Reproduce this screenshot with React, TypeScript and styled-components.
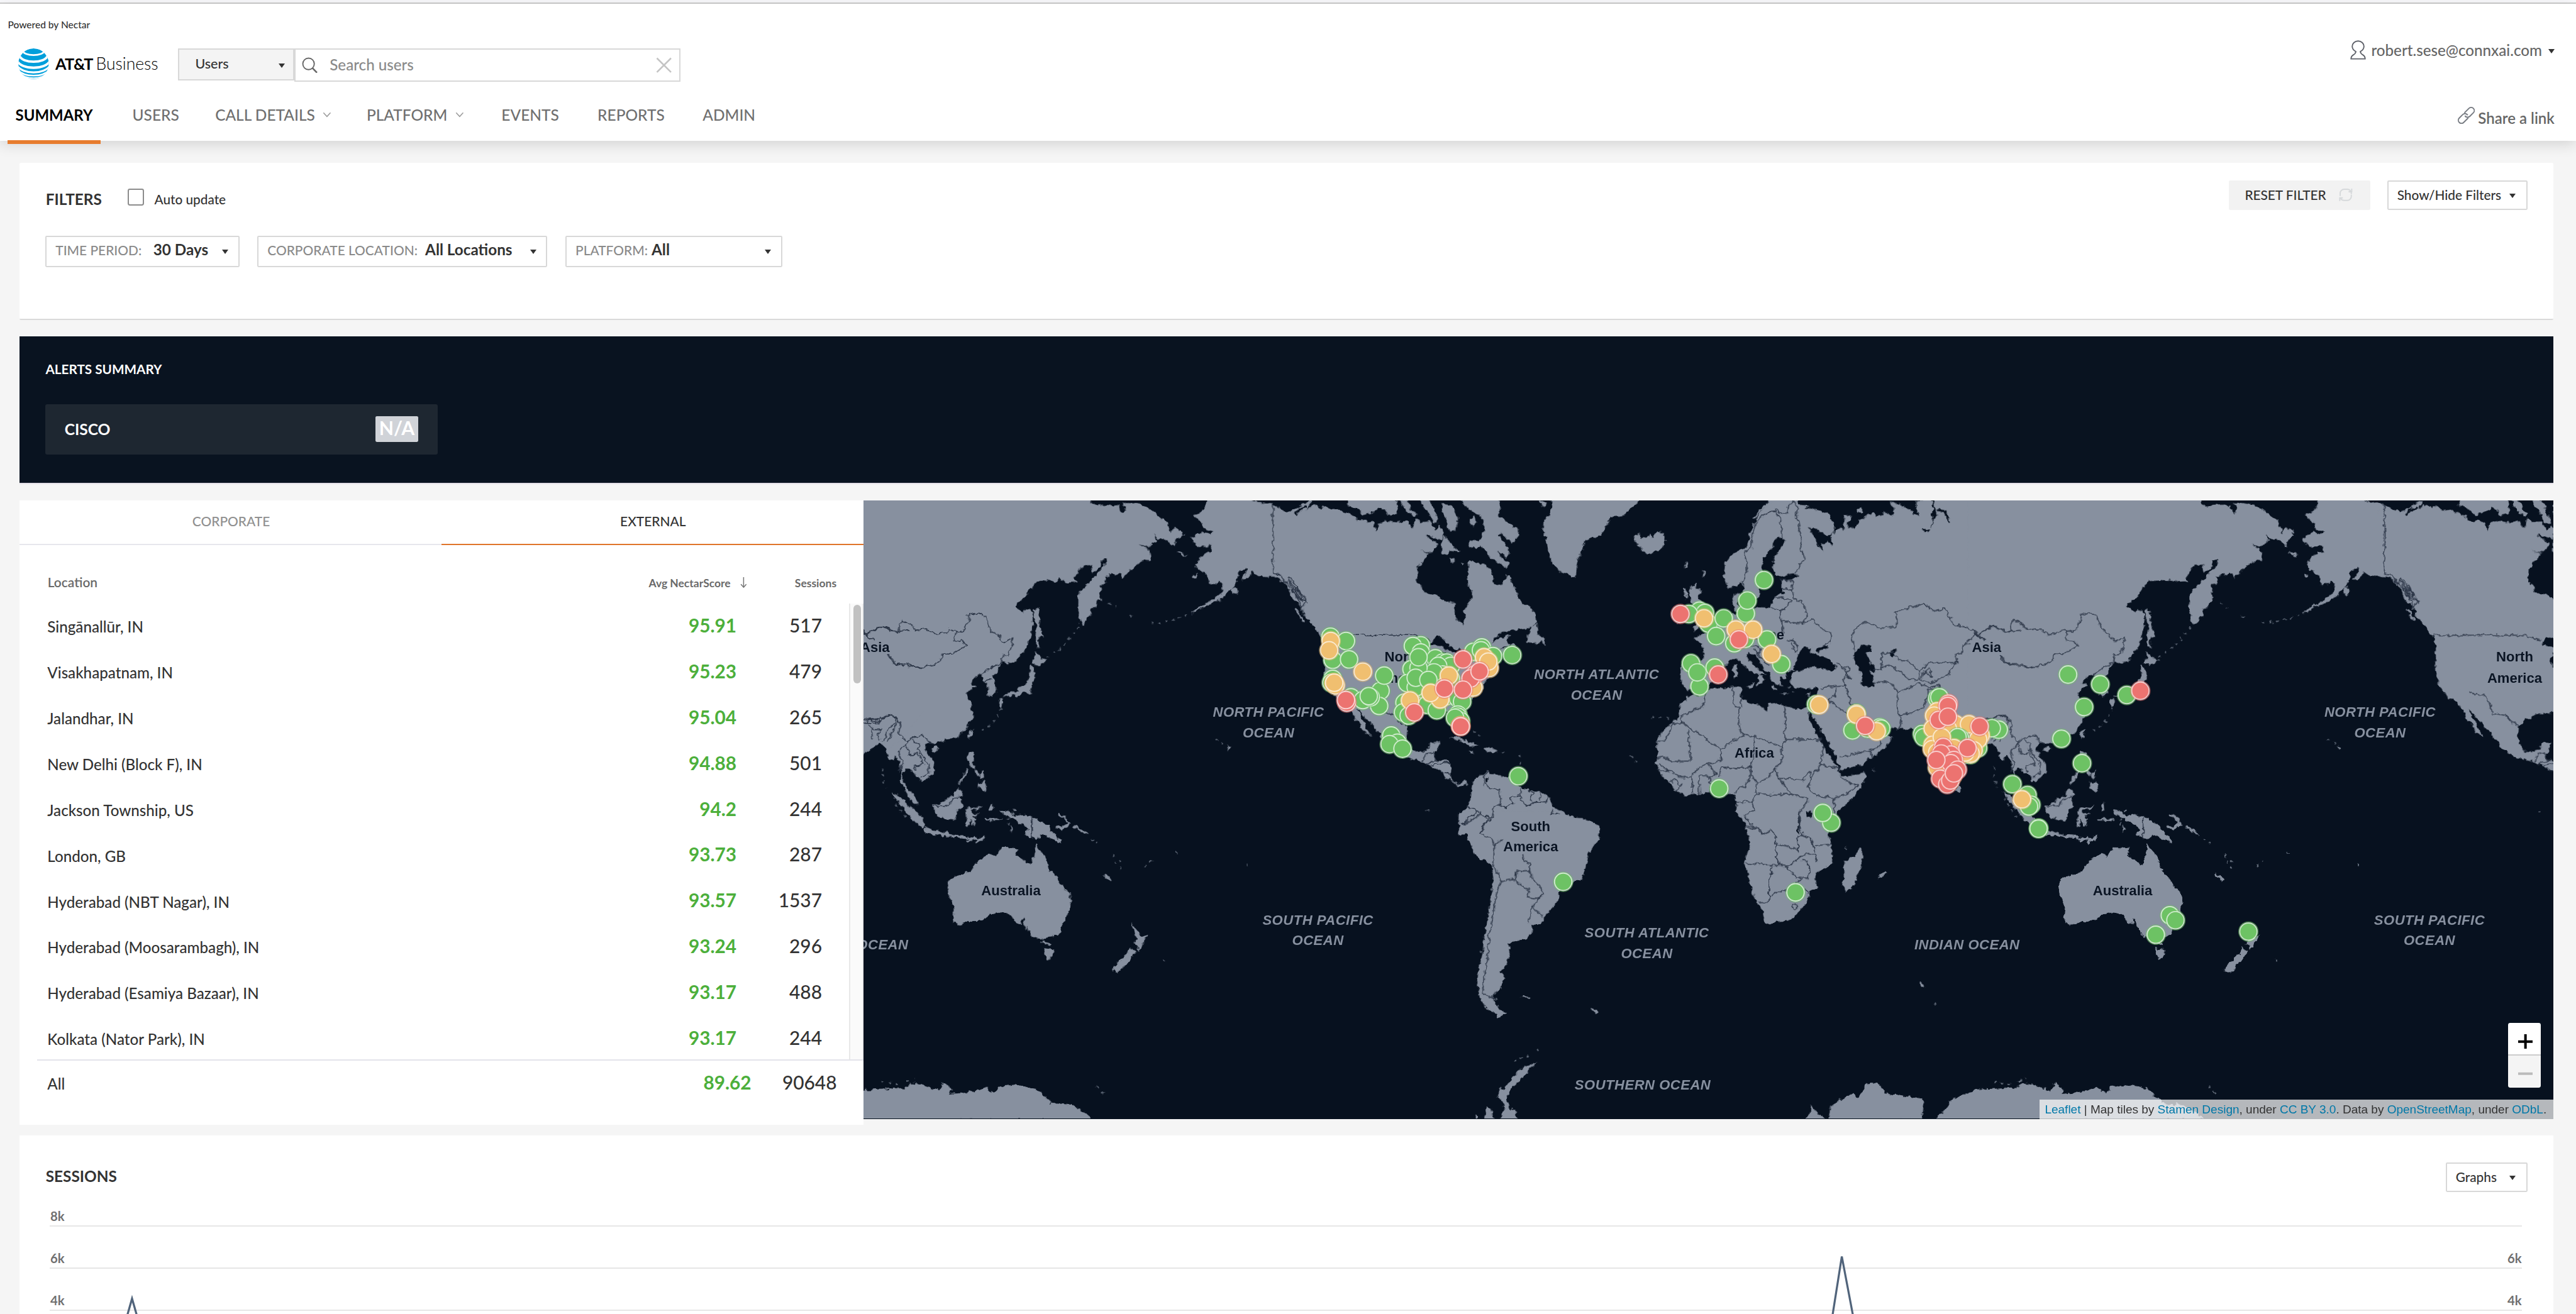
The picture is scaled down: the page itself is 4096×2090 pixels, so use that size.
import React from "react";
import styled, { createGlobalStyle, css } from "styled-components";

/* 1rem equals one layout unit; the layout is 1898.5 units wide. */
const GlobalStyle = createGlobalStyle`
  html { font-size: calc(100vw / 1898.5); }
  * { box-sizing: border-box; }
  body { margin: 0; background: #f5f5f5; overflow: hidden; }
  #root { height: 100vh; overflow: hidden; }
`;

const Page = styled.div`
  display: flex;
  flex-direction: column;
  height: 968.5rem;
  font-family: Lato, "Open Sans", sans-serif;
  font-size: 11.2rem;
  font-weight: 500;
  color: #333;
  white-space: nowrap;
`;

const TopStrip = styled.div`
  flex: none;
  height: 3rem;
  background: #f8f8fb;
  border-bottom: 1rem solid #ccc;
`;

const Header = styled.header`
  flex: none;
  position: relative;
  display: flex;
  justify-content: space-between;
  height: 101rem;
  background: #fff;
  box-shadow: 0 3rem 10rem rgba(0, 0, 0, 0.14);
`;

const HeaderLeft = styled.div`
  display: flex;
  flex-direction: column;
`;

const Powered = styled.div`
  margin: 10.3rem 0 12.2rem 5.8rem;
  font-size: 7.2rem;
  line-height: 10rem;
`;

const BrandRow = styled.div`
  display: flex;
  align-items: flex-start;
  height: 24.8rem;
  padding-left: 13.6rem;
`;

const Brand = styled.div`
  display: flex;
  align-items: center;
  width: 117.4rem;
  color: #000;
  line-height: 22.8rem;
  svg { width: 22.6rem; height: 22.6rem; margin-right: 4.6rem; }
`;
const BrandBold = styled.span`
  font-size: 11.7rem;
  font-weight: 700;
  letter-spacing: -0.3rem;
`;
const BrandLight = styled.span`
  margin-left: 2.2rem;
  font-size: 12.3rem;
  font-weight: 300;
`;

const Caret = styled.span`
  width: 0;
  height: 0;
  border: 2.6rem solid transparent;
  border-top: 3.6rem solid #333;
  border-bottom: 0;
`;

const ScopeSelect = styled.div`
  display: flex;
  align-items: center;
  justify-content: space-between;
  width: 86rem;
  height: 24rem;
  padding: 0 6.3rem 1.4rem 12rem;
  background: #f4f4f4;
  border: 1rem solid #d8d8d8;
  font-size: 9.95rem;
  ${Caret} { margin-top: 3rem; }
`;

const SearchBox = styled.div`
  display: flex;
  align-items: center;
  width: 284.6rem;
  height: 24.8rem;
  padding: 0 5.6rem 0 4.6rem;
  border: 1rem solid #d8d8d8;
  background: #fff;
  svg { width: 11.8rem; height: 11.8rem; }
`;
const SearchText = styled.span`
  flex: 1;
  padding-left: 8.7rem;
  padding-bottom: 1.2rem;
  font-size: 11.2rem;
  color: #8a8a8a;
`;

const Nav = styled.nav`
  display: grid;
  grid-template-columns: 86.2rem 61rem 111.6rem 99.4rem 70.8rem 77.5rem auto;
  justify-items: start;
  margin: 4.9rem 0 0 5.5rem;
`;
const NavItem = styled.div<{ $active?: boolean }>`
  display: flex;
  align-items: center;
  height: 40.8rem;
  padding: 1rem 5.9rem 0;
  border-bottom: 3rem solid ${(p) => (p.$active ? "#e77c2e" : "transparent")};
  line-height: 37.8rem;
  font-size: ${(p) => (p.$active ? 11.1 : 11.35)}rem;
  font-weight: ${(p) => (p.$active ? 700 : 500)};
  letter-spacing: 0;
  color: ${(p) => (p.$active ? "#000" : "#707070")};
  svg { width: 6.4rem; height: 4rem; margin-left: 5.8rem; }
`;

const HeaderRight = styled.div`
  display: flex;
  flex-direction: column;
  align-items: flex-end;
  padding: 25.7rem 15.8rem 0 0;
  color: #666;
`;
const UserMenu = styled.div`
  display: flex;
  align-items: center;
  height: 16rem;
  svg { width: 11.6rem; height: 14.4rem; margin-right: 4rem; }
  ${Caret} { margin: 2rem 0 0 4.6rem; }
`;
const ShareLink = styled.div`
  display: flex;
  align-items: center;
  height: 16rem;
  margin-top: 34.4rem;
  font-weight: 600;
  font-size: 11.15rem;
  svg { width: 12.6rem; height: 12.6rem; margin: 0 2.5rem 4rem 0; }
`;

const Main = styled.main`
  display: flex;
  flex-direction: column;
  flex: 1;
  min-height: 0;
  padding: 16rem 16.9rem 0 14.5rem;
`;

const FilterPanel = styled.section`
  flex: none;
  height: 116rem;
  padding: 13rem 19rem 0 18.9rem;
  background: #fff;
  border-bottom: 1rem solid #d9d9d9;
  border-radius: 1rem;
`;
const FilterHead = styled.div`
  display: flex;
  justify-content: space-between;
  align-items: flex-start;
  height: 41rem;
`;
const Group = styled.div`
  display: flex;
`;
const FilterTitle = styled.div`
  display: flex;
  align-items: center;
  height: 27.8rem;
`;
const Heading = styled.h2`
  margin: 0 0 0 0.3rem;
  font-size: 11.3rem;
  font-weight: 700;
`;
const CheckBox = styled.span`
  width: 12rem;
  height: 12.6rem;
  margin: 0 7.5rem 3rem 19.3rem;
  border: 1rem solid #8c8c8c;
  border-radius: 1.6rem;
`;
const CheckLabel = styled.span`
  font-size: 9.62rem;
`;

const Button = styled.button<{ $w: number; $flat?: boolean }>`
  display: flex;
  align-items: center;
  justify-content: space-between;
  width: ${(p) => p.$w}rem;
  height: 22rem;
  margin: 0;
  border: 1rem solid #d8d8d8;
  border-radius: 1rem;
  background: #fff;
  font: 500 9.65rem/20rem Lato, sans-serif;
  color: #333;
  padding: 0 7.6rem 1rem 6.2rem;
  ${Caret} { margin-top: 1.4rem; }
  ${(p) =>
    p.$flat &&
    css`
      margin-right: 12.9rem;
      border-color: #f2f2f2;
      background: #f2f2f2;
      padding: 0 11.4rem 1rem 10.9rem;
    `}
  svg { width: 11rem; height: 11rem; }
`;

const SelectRow = styled.div`
  display: flex;
  gap: 13.2rem;
`;
const Select = styled.div<{ $w: number; $gap: number }>`
  display: flex;
  align-items: baseline;
  width: ${(p) => p.$w}rem;
  height: 22.8rem;
  padding: 0 7rem 0 6.6rem;
  border: 1rem solid #d8d8d8;
  border-radius: 1rem;
  line-height: 18.8rem;
  font-size: 9.7rem;
  color: #8a8a8a;
  b { flex: 1; margin-left: ${(p) => p.$gap}rem; font-size: 11.25rem; color: #333; }
  ${Caret} { align-self: center; margin-top: 0.4rem; }
`;

const AlertPanel = styled.section`
  flex: none;
  height: 109rem;
  margin-top: 12rem;
  padding: 18.5rem 19rem 0 19.1rem;
  background: #091320;
  border-bottom: 1.1rem solid #e4e0e8;
`;
const AlertTitle = styled.h2`
  margin: 0 0 19.5rem;
  font-size: 9.6rem;
  line-height: 12rem;
  font-weight: 700;
  color: #fff;
`;
const AlertCard = styled.div`
  display: flex;
  align-items: center;
  justify-content: space-between;
  width: 288.9rem;
  height: 37.1rem;
  padding: 0 14.1rem 0.6rem 14rem;
  border-radius: 1.4rem;
  background: #1e2731;
  color: #fff;
  font-size: 11.4rem;
  font-weight: 700;
`;
const AlertValue = styled.span`
  width: 31.9rem;
  height: 18.9rem;
  border-radius: 1rem;
  background: #d0d3d8;
  font-size: 14rem;
  line-height: 17.4rem;
  text-align: center;
`;

const Overview = styled.section`
  flex: none;
  display: flex;
  align-items: flex-start;
  height: 460rem;
  margin-top: 12rem;
`;
const TablePanel = styled.div`
  flex: none;
  display: flex;
  flex-direction: column;
  width: 621.8rem;
  height: 460rem;
  background: #fff;
`;
const Tabs = styled.div`
  display: flex;
  height: 33rem;
`;
const Tab = styled.div<{ $active?: boolean }>`
  flex: 1;
  border-bottom: 1rem solid ${(p) => (p.$active ? "#e0752a" : "#e6e6ec")};
  text-align: center;
  text-indent: 0.8rem;
  line-height: 31rem;
  font-size: 9.7rem;
  color: ${(p) => (p.$active ? "#333" : "#909090")};
`;
const TableHead = styled.div`
  display: flex;
  align-items: center;
  height: 43rem;
  padding: 11.4rem 19.8rem 0 20.6rem;
  font-size: 9.7rem;
  font-weight: 600;
  color: #6a6a6a;
  svg { width: 5rem; height: 8rem; margin: 0.6rem 35.4rem 0 7rem; }
`;
const HeadName = styled.span`
  flex: 1;
`;
const HeadNumber = styled.span`
  padding-top: 1rem;
  font-size: 8.1rem;
  font-weight: 700;
`;
const TableBody = styled.div`
  display: flex;
  height: 336.2rem;
  overflow: hidden;
`;
const Rows = styled.div`
  flex: 1;
`;
const Row = styled.div`
  display: flex;
  align-items: center;
  height: 33.8rem;
  padding: 0 19.7rem 0 20.4rem;
`;
const Place = styled.span`
  flex: 1;
  font-size: 11.2rem;
`;
const Score = styled.span`
  margin-bottom: 2rem;
  font-size: 13.8rem;
  font-weight: 700;
  color: #4caf3b;
`;
const Count = styled.span`
  width: 63rem;
  margin-bottom: 2rem;
  font-size: 13.85rem;
  text-align: right;
`;
const Track = styled.div`
  width: 10.8rem;
  padding: 1rem 0 0 2.4rem;
  border-left: 1rem solid #e8e8e8;
  border-right: 1rem solid #ededed;
  background: #fafafa;
`;
const Thumb = styled.div`
  width: 5.8rem;
  height: 58rem;
  border-radius: 3rem;
  background: #c1c1c1;
`;
const TotalRow = styled.div`
  display: flex;
  align-items: center;
  height: 34.6rem;
  margin-left: 12.9rem;
  padding: 0 19.6rem 0 7.5rem;
  border-top: 1rem solid #e3e3ea;
`;

const MapPanel = styled.div`
  position: relative;
  flex: 1;
  height: 456rem;
  background: #07111f;
  overflow: hidden;
`;
const MapCanvas = styled.svg`
  display: block;
  width: 100%;
  height: 100%;
  .land polygon { fill: #87909f; }
  .land polyline { fill: none; stroke: #87909f; vector-effect: non-scaling-stroke; }
  .water polygon { fill: #07111f; }
  .water polyline { fill: none; stroke: #07111f; vector-effect: non-scaling-stroke; }
  .border polyline {
    fill: none;
    stroke: #2b3546;
    stroke-width: 1.6px;
    stroke-linejoin: round;
    vector-effect: non-scaling-stroke;
  }
  text { font: 700 10.24px "Liberation Sans", Arial, sans-serif; text-anchor: middle; }
  .continent { fill: #0a1423; }
  .ocean { fill: #87909f; font-style: italic; letter-spacing: 0.22px; }
`;
const ZoomControl = styled.div`
  position: absolute;
  right: 9.2rem;
  bottom: 23rem;
  display: flex;
  flex-direction: column;
  width: 24rem;
  border-radius: 1.6rem;
  overflow: hidden;
`;
const ZoomButton = styled.div<{ $off?: boolean }>`
  display: flex;
  align-items: center;
  justify-content: center;
  height: 24rem;
  background: ${(p) => (p.$off ? "#f4f4f4" : "#fff")};
  border-bottom: ${(p) => (p.$off ? "0" : "1rem solid #ccc")};
  color: ${(p) => (p.$off ? "#bbb" : "#000")};
  padding: ${(p) => (p.$off ? "3.4rem 0 0 1.4rem" : "4.8rem 0 0 1.6rem")};
  svg { width: 10.8rem; height: 10.8rem; }
`;
const Attribution = styled.div`
  position: absolute;
  right: 0;
  bottom: 0;
  height: 14.1rem;
  padding: 0.7rem 4.8rem 0 4rem;
  background: rgba(255, 255, 255, 0.7);
  font: 8.81rem/13.4rem "Liberation Sans", Arial, sans-serif;
  color: #333;
  a { color: #0078a8; }
`;

const SessionPanel = styled.section`
  flex: 1;
  margin-top: 8rem;
  padding: 20rem 18.9rem 0;
  background: #fff;
`;
const SessionHead = styled.div`
  display: flex;
  justify-content: space-between;
  align-items: flex-start;
  height: 16.4rem;
  ${Heading} { line-height: 20rem; }
`;
const Chart = styled.div`
  position: relative;
  margin: 0 4.2rem 0 3.2rem;
`;
const GridLine = styled.div`
  display: flex;
  justify-content: space-between;
  align-items: flex-end;
  height: 31rem;
  padding: 0 0.1rem 1.4rem 0.5rem;
  border-bottom: 1rem solid #e6e6e6;
  font-size: 9.4rem;
  font-weight: 700;
  line-height: 11.2rem;
  color: #6f6f6f;
`;
const Spikes = styled.svg`
  position: absolute;
  left: 0;
  top: 0;
  width: 100%;
  height: 96rem;
  overflow: visible;
  polyline { fill: none; stroke: #51647b; stroke-width: 1.5; }
`;

/* ---------- icons ---------- */
const Globe = () => (
  <svg viewBox="0 0 24 24">
    <defs>
      <clipPath id="globe"><circle cx="12" cy="12" r="12" /></clipPath>
    </defs>
    <g clipPath="url(#globe)" fill="none" stroke="#fff">
      <circle cx="12" cy="12" r="12" fill="#009fdb" stroke="none" />
      <path d="M3.6 1.6C3.6 6.4 20.4 6.4 20.4 1.6" strokeWidth="1.4" />
      <path d="M1 5.6C2.6 12 21.4 12 23 5.6" strokeWidth="1.9" />
      <path d="M-1 9.6C2.6 17 21.4 17 25 9.6" strokeWidth="1.9" />
      <path d="M-1 13.4C3.6 20.6 20.4 20.6 25 13.4" strokeWidth="1.6" />
      <path d="M-1 16.2C4.6 23 19.4 23 25 16.2" strokeWidth="1.3" />
      <path d="M1 19.2C5.6 24.6 18.4 24.6 23 19.2" strokeWidth="1" />
    </g>
  </svg>
);
const SearchIcon = () => (
  <svg viewBox="0 0 24 24" fill="none" stroke="#666" strokeWidth="1.8">
    <circle cx="10" cy="10" r="8.6" />
    <path d="M16 16.4l6.6 6.8" strokeWidth="2.4" />
  </svg>
);
const ClearIcon = () => (
  <svg viewBox="0 0 24 24" fill="none" stroke="#c4c4c4" strokeWidth="2.4">
    <path d="M1.4 1.4l21.2 21.2M22.6 1.4L1.4 22.6" />
  </svg>
);
const ChevronIcon = () => (
  <svg viewBox="0 0 16 10" fill="none" stroke="#999" strokeWidth="1.7">
    <path d="M1.5 1.5L8 8.5l6.5-7" />
  </svg>
);
const UserIcon = () => (
  <svg viewBox="0 0 24 30" fill="none" stroke="#5d6068" strokeWidth="1.8">
    <path d="M8.6 17.4C5 15.4 3 12.4 3 9.4a9 8.2 0 0 1 18 0c0 3-2 6-5.6 8 .2 2.4 1.2 3.600 4 5.200 2.400 1.400 3.400 3 3.400 6H1.200c0-3 1-4.600 3.400-6 2.800-1.600 3.800-2.800 4-5.200z" />
  </svg>
);
const LinkIcon = () => (
  <svg viewBox="0 0 24 24" fill="none" stroke="#777b82" strokeWidth="1.7">
    <g transform="rotate(-45 12 12)">
      <path d="M11.5 16.4H2.4a4.400 4.400 0 0 1 0-8.800h7a4.400 4.400 0 0 1 4.200 5.600" />
      <path d="M12.5 7.6h9.100a4.400 4.400 0 0 1 0 8.800h-7a4.400 4.400 0 0 1-4.200-5.600" />
    </g>
  </svg>
);
const ResetIcon = () => (
  <svg viewBox="0 0 24 24" fill="none" stroke="#d6d9db" strokeWidth="2">
    <path d="M3 14V9.5a6.5 6.5 0 0 1 6.5-6.5h5a6.5 6.5 0 0 1 6.5 6.5V11M21 12v2.5a6.5 6.5 0 0 1-6.5 6.5h-5A6.5 6.5 0 0 1 3.6 17" />
    <path d="M2.4 22v-5h5M21.6 2v5h-5" />
  </svg>
);
const SortIcon = () => (
  <svg viewBox="0 0 10 16" fill="none" stroke="#777" strokeWidth="1.4">
    <path d="M5 0v15M1 10.5l4 4.500 4-4.500" />
  </svg>
);

/* ---------- map ---------- */
type Sheet = { m: string; land?: string[]; thin?: string[]; dotted?: string[]; water?: string[]; inlet?: string[]; borders?: string[] };

const PACIFIC = "translate(635 365) scale(.20727 .15944)";
const AMERICA = "translate(950 365) scale(.20727 .15944)";
const EURASIA = "translate(1210 365) scale(.22321 .15944)";
const SOUTH_W = "translate(635 600) scale(.3986 .14668)";
const SOUTH_E = "translate(1250 600) scale(.41358 .14668)";

const sheets: Sheet[] = [
  {
    m: PACIFIC,
    land: [
      "-20,0 815,0 813,42 830,50 858,48 890,44 905,55 915,48 920,78 932,84 937,60 925,36 960,38 1000,45 1030,70 1060,100 1085,122 1093,150 1098,178 1102,160 1112,150 1135,165 1145,185 1118,205 1114,240 1100,225 1080,203 1055,205 1040,180 1048,212 1020,240 990,228 1018,250 1028,303 1005,298 975,325 950,355 930,382 918,360 885,370 862,380 868,410 848,412 852,440 845,465 850,485 838,490 835,520 815,530 815,558 805,565 795,590 782,605 775,580 768,530 768,470 785,430 815,400 840,360 858,335 870,300 852,300 850,335 820,360 815,345 820,325 785,325 770,355 752,385 765,402 735,405 705,390 690,400 665,395 625,398 605,425 585,465 560,495 543,512 555,525 575,543 585,528 598,532 608,545 608,600 600,660 585,705 560,750 540,775 515,778 500,770 485,795 488,815 465,840 478,880 480,915 462,930 447,928 448,895 445,870 432,860 428,835 412,835 398,850 385,872 405,882 385,900 370,920 385,950 388,985 398,1020 380,1060 360,1098 335,1122 305,1128 275,1143 262,1150 242,1140 225,1155 222,1172 240,1210 256,1240 258,1280 240,1305 212,1330 205,1305 185,1285 170,1265 155,1265 145,1290 147,1315 158,1345 172,1370 190,1395 205,1435 185,1425 165,1395 155,1360 138,1330 143,1280 130,1225 118,1205 108,1225 95,1220 90,1180 70,1150 60,1132 25,1140 -20,1148",
      "615,525 628,530 632,590 645,660 632,655 628,680 635,708 622,705 618,650 622,600 612,560",
      "615,722 635,750 657,765 640,780 625,790 605,778 618,755",
      "598,785 612,800 618,835 608,870 600,915 575,915 548,940 540,925 515,930 497,938 530,908 555,910 560,890 585,870 598,835 596,800",
      "488,940 502,945 500,970 492,985 487,960",
      "385,1090 397,1085 392,1112 382,1130 377,1112",
      "250,1168 268,1160 276,1170 265,1188 252,1185",
      "380,1185 398,1188 402,1215 392,1240 405,1265 388,1255 375,1225",
      "415,1330 425,1335 435,1318 447,1345 438,1370 425,1362 412,1352",
      "400,1270 412,1275 420,1300 405,1295", "418,1285 432,1275 435,1305 425,1315",
      "255,1435 275,1430 300,1405 325,1392 330,1370 345,1355 362,1385 348,1400 358,1440 340,1460 328,1508 300,1498 270,1488 258,1460",
      "370,1465 380,1442 405,1447 430,1433 420,1450 385,1455 390,1475 418,1472 395,1488 408,1530 398,1522 385,1495 378,1535 368,1530 373,1490",
      "105,1375 130,1385 165,1435 205,1475 220,1500 220,1535 200,1525 165,1480 135,1430",
      "497,1462 515,1460 535,1468 525,1485 505,1478",
      "455,1430 465,1425 468,1450 458,1460", "440,1497 490,1495 492,1505 445,1505", "530,1525 540,1545 532,1560",
      "1228,0 1225,40 1212,75 1183,90 1190,108 1210,130 1215,155 1250,168 1240,182 1210,172 1170,198 1180,220 1195,240 1225,240 1240,228 1247,265 1225,268 1198,292 1188,330 1205,355 1230,370 1235,415 1250,405 1262,415 1270,400 1285,410 1278,455 1245,485 1205,520 1235,508 1268,490 1300,455 1325,420 1340,380 1342,350 1370,338 1362,365 1350,392 1375,387 1388,355 1410,375 1470,378 1500,400 1520,440 1535,485 1568,520 1640,640 1640,75 1568,68 1545,85 1520,78 1495,68 1462,42 1395,28 1350,0",
      "1315,430 1335,425 1338,450 1320,460", "1175,368 1195,370 1190,382 1178,380", "1122,265 1140,265 1158,283 1140,280",
      "1297,1160 1310,1166 1302,1178",
    ],
    thin: ["377,1268 345,1335", "690,1535 710,1540 735,1520 725,1495 700,1480", "755,1530 800,1568", "220,1540 260,1555 320,1572", "1245,492 1215,515 1180,540", "1545,530 1568,580"],
    dotted: ["1180,542 1150,560 1110,577 1060,590 1020,590", "660,750 715,700 735,670 755,640 775,610", "878,500 902,520", "955,558 968,572", "1258,1130 1270,1137 1285,1150 1300,1160", "495,985 480,1030 455,1065 420,1095", "75,1260 72,1300 85,1355", "110,1400 130,1450 165,1505"],
    borders: [
      "10,645 65,608 90,612 105,630 135,632 132,600 145,578 178,600 190,625 230,618 265,645 300,635 310,622 335,628 335,640 325,672 355,675 375,695 320,735 285,735 280,765 265,780 240,785 210,802 160,780 118,780 108,755 92,742",
      "335,628 362,632 382,572 378,555 412,545 438,560 460,630 490,650 500,680 535,662 535,690 522,740 510,742 502,735 498,772 460,800 420,835",
      "0,628 45,675", "0,1060 25,1040 65,1050 75,1030 108,1015 122,1030 120,1050 100,1075 75,1140", "0,1040 60,1035 60,1055 0,1052", "25,1060 45,1085 70,1085 55,1110 65,1130", "35,1075 38,1130",
      "120,1025 140,1060 130,1100 155,1135 165,1145 130,1185 145,1240 132,1280", "160,1143 180,1122 215,1110 240,1142 256,1152", "158,1150 170,1200 200,1195 222,1245 188,1250 190,1278", "180,1130 205,1155 200,1180 240,1245 238,1290 212,1308", "258,1438 300,1440 325,1405 350,1392", "605,1495 605,1568", "430,862 460,850",
      "1462,42 1462,365 1485,370 1510,410 1522,380 1545,420 1565,465", "1500,390 1530,440 1560,500", "1520,400 1540,460 1568,490", "1525,440 1545,430 1568,480",
    ],
  },
  {
    m: AMERICA,
    land: [
      "-80,72 0,76 40,45 75,25 78,40 60,70 90,42 110,60 130,50 150,72 180,68 205,85 240,105 240,120 275,118 300,128 308,168 318,130 345,118 385,128 420,118 440,155 448,110 470,125 500,122 520,165 535,138 548,165 540,210 525,200 500,190 530,225 520,250 495,268 465,255 495,272 490,290 470,310 455,345 452,405 470,415 475,450 495,455 520,460 550,490 590,503 588,550 605,590 622,597 628,570 622,530 635,505 650,480 650,440 632,410 638,360 635,315 650,303 690,320 722,355 728,410 750,422 765,400 772,370 782,370 790,400 805,440 815,480 845,515 858,520 875,545 878,590 850,618 800,625 765,628 735,655 720,690 750,660 785,645 772,675 785,690 760,705 745,720 725,745 740,800 700,850 690,900 650,940 620,970 625,1010 635,1060 620,1100 600,1070 580,1015 560,1000 520,1012 490,1010 440,1040 420,1070 418,1120 425,1160 440,1185 475,1185 495,1175 500,1150 538,1140 530,1170 518,1195 520,1225 555,1228 578,1240 575,1290 572,1310 600,1340 625,1318 640,1345 628,1335 605,1350 580,1325 555,1305 545,1280 515,1262 480,1235 440,1222 400,1210 360,1170 325,1110 290,1060 255,1005 240,990 262,1040 278,1085 292,1115 270,1100 252,1060 232,1035 230,1015 205,960 170,940 140,890 125,830 125,700 115,655 90,612 60,570 50,540 40,500 20,440 0,400 -40,370 -80,370",
      "205,0 208,50 240,62 265,92 300,75 325,60 345,72 352,95 385,85 382,25 378,0",
      "395,20 420,25 435,70 455,85 445,100 420,80 405,55",
      "465,20 480,60 500,90 510,130 530,130 525,90 512,60 500,20",
      "545,40 580,50 600,105 598,150 575,170 560,150 560,100 540,80",
      "610,20 740,20 752,55 745,95 775,125 815,158 818,185 795,225 775,200 755,172 743,185 765,220 782,262 775,290 740,262 755,290 782,322 775,335 740,308 715,290 700,260 685,240 665,250 638,235 640,210 675,212 685,195 695,150 690,110 665,85 635,60",
      "645,110 660,100 668,125 655,145 642,130",
      "548,185 562,205 580,232 608,262 590,262 575,258 560,282 540,262 540,225", "572,290 590,300 580,312", "612,308 622,312 616,325",
      "930,0 935,45 925,100 905,110 903,160 912,195 920,250 930,300 945,330 965,355 985,362 1012,382 1020,375 1022,340 1030,290 1045,250 1050,208 1085,198 1112,180 1130,140 1142,102 1185,95 1210,65 1245,30 1260,0",
      "888,20 905,28 918,35 915,55 895,50",
      "1225,215 1228,190 1245,175 1252,200 1275,195 1285,180 1292,195 1310,168 1328,172 1340,210 1325,245 1300,262 1285,273 1255,262 1250,240 1235,232 1248,222",
      "1430,418 1450,412 1448,435 1468,440 1452,475 1480,510 1512,560 1500,600 1440,625 1430,618 1460,590 1450,545 1430,490 1420,455",
      "1385,510 1430,520 1425,590 1375,590",
      "865,602 880,595 885,640 905,660 910,695 898,678 880,685 845,680 850,650",
      "745,720 775,700 795,690 805,700 780,725 755,748",
      "565,1128 595,1118 640,1140 678,1162 640,1160 610,1138 585,1125", "690,1168 708,1162 742,1182 705,1190", "635,1187 655,1189 645,1197", "755,1187 770,1188 762,1194",
      "650,1345 662,1305 690,1295 708,1275 715,1290 745,1295 780,1302 810,1340 850,1365 895,1370 930,1405 940,1445 975,1465 1010,1492 1055,1495 1085,1520 1105,1530 1108,1570 600,1570 605,1540 605,1480 635,1440 645,1390",
    ],
    thin: ["1405,430 1412,480", "1413,310 1413,335", "1475,350 1475,375", "90,600 120,655", "1395,790 1395,850"],
    dotted: ["820,1200 822,1245", "655,1090 690,1125", "42,520 60,580", "1290,1030 1350,1035", "1212,1210 1235,1235", "488,1460 505,1466", "1440,610 1430,625"],
    water: [
      "500,693 512,672 530,652 548,665 575,705 605,712 640,715 700,740 640,740 590,728 560,715 540,700 520,695",
      "540,730 560,720 555,790 540,800 532,760",
      "700,1310 708,1300 710,1325 702,1328",
    ],
    inlet: ["0,72 20,62 40,50", "20,90 35,70 60,55", "430,140 425,120", "490,185 520,212", "722,345 730,400"],
    borders: [
      "115,648 450,648 462,660 500,668", "240,910 262,920 300,925 330,1010 345,1010 370,1015 400,1060", "475,1230 490,1195 515,1190 520,1225", "488,1250 500,1235 525,1228", "505,1250 540,1240 578,1240", "540,1280 575,1288", "600,1325 605,1340",
      "708,1278 692,1300 700,1345 720,1358 748,1365 752,1400 750,1435 770,1447 800,1425 782,1398 822,1388 825,1345", "820,1390 840,1437 880,1420 910,1422 925,1400", "850,1365 870,1378 858,1400 865,1420", "893,1370 892,1408",
      "750,1430 728,1440 728,1495 695,1485 665,1458 630,1440", "665,1458 660,1480 635,1490 625,1520 608,1515", "725,1495 690,1520 682,1568", "0,390 40,480 60,490 45,520 20,440 35,440 65,500", "370,1015 420,1070", "940,1455 930,1475 960,1478",
    ],
  },
  {
    m: EURASIA,
    land: [
      "410,0 420,35 395,70 378,110 365,150 355,185 345,240 310,262 275,310 270,370 278,415 290,430 310,420 330,400 335,440 345,475 352,495 375,488 388,470 388,435 400,405 403,370 395,335 398,298 415,265 432,240 440,200 462,193 475,210 455,255 435,290 433,330 440,368 455,380 500,362 518,375 495,390 460,395 458,425 465,450 440,470 430,500 425,522 380,518 350,540 325,545 315,500 328,470 325,450 305,460 298,500 310,548 280,560 245,600 215,635 170,660 178,672 200,690 205,730 200,765 150,755 140,770 130,830 130,880 150,900 190,905 230,865 262,810 290,765 318,758 345,805 382,835 388,860 375,885 395,868 405,850 385,832 410,830 365,785 345,750 350,725 375,740 395,790 420,820 430,860 445,880 462,878 455,845 478,845 475,820 495,810 515,810 490,835 490,865 505,890 545,898 580,888 582,920 565,965 548,990 555,1010 575,1045 597,1100 620,1160 640,1205 655,1272 720,1250 755,1215 790,1180 805,1170 825,1125 800,1100 780,1095 750,1120 735,1110 715,1080 690,1040 690,1020 715,1035 740,1060 790,1080 890,1080 910,1100 935,1150 950,1250 975,1340 1005,1370 1030,1330 1060,1260 1110,1190 1150,1150 1165,1140 1180,1180 1230,1120 1300,1000 1300,0 965,0 968,60 975,90 955,150 940,178 925,160 950,160 962,120 958,80 963,40 958,25 905,25 905,60 918,98 880,70 850,40 820,30 832,60 830,95 800,78 775,98 765,80 745,92 715,120 705,150 683,150 680,125 692,95 668,95 665,130 668,170 658,150 640,165 622,190 628,235 610,218 590,225 602,255 580,240 572,200 548,148 580,165 610,185 632,175 638,140 610,85 575,65 535,60 555,50 520,45 515,30 510,0",
      "345,885 375,868 362,892", "300,785 315,778 315,845 303,845", "460,915 487,918 470,922", "540,925 560,915 552,928", "1040,1345 1052,1350 1050,1370 1038,1368", "708,65 722,58 728,75 715,88",
      "145,930 190,925 207,905 240,895 325,885 330,900 322,935 350,958 385,970 412,998 420,965 445,960 480,980 520,990 548,983 552,1030 575,1100 600,1165 615,1200 640,1250 660,1298 700,1295 738,1285 735,1325 715,1370 690,1410 650,1460 625,1500 615,1568 345,1568 345,1520 310,1470 315,1415 300,1385 280,1385 255,1360 220,1375 180,1382 140,1390 110,1360 88,1330 60,1290 45,1240 55,1200 48,1140 75,1080 100,1055 125,1020 120,985 150,940",
    ],
    thin: ["370,110 395,60 430,30", "430,880 440,905", "1048,1350 1048,1366"],
    dotted: ["150,305 150,335", "205,350 205,375", "460,880 490,890 500,915", "765,1270 770,1280"],
    water: [
      "500,800 510,760 522,720 538,702 558,708 555,730 585,740 620,760 642,800 620,812 590,800 555,795 520,815", "575,715 600,695 618,700 600,720 580,725",
      "698,735 715,710 735,692 758,695 757,720 738,728 748,765 758,785 772,800 768,820 752,815 765,850 768,885 748,892 722,872 728,830 710,790 698,760", "818,735 835,708 838,722 828,745", "540,1465 560,1462 560,1490 542,1488",
    ],
    inlet: ["975,70 1000,75 1008,100 1018,130", "500,800 515,808", "455,440 468,455", "515,1568 520,1500"],
    borders: [
      "440,70 400,95 375,130 362,200 362,245 342,255 342,285 348,345 340,380 335,420", "415,85 432,70 455,100 462,195", "440,65 460,90 480,85 485,45 500,32 515,55 508,95 522,130 515,160 525,200 525,255 540,290 505,360",
      "455,392 500,395 495,440 458,430", "433,480 455,475 480,480 495,490 460,540 430,520", "495,440 505,485 528,490 548,548 530,595 500,590 462,585 455,540 490,500", "530,595 560,572 580,605 625,640 622,680 590,705", "462,585 465,640", "480,670 500,668 515,710 508,730 490,680",
      "700,720 694,645 712,610 740,588 780,612 835,612 845,580 838,540 880,525 930,500 962,535 1000,525 1030,600 1070,608 1105,645 1060,690 1058,728 1035,740 1040,775 970,775 940,780 920,815 880,768 850,765 828,728 790,735 790,805 765,805", "790,805 812,780 850,812 885,855 915,850 920,815", "925,825 950,800 960,840 935,820 920,850 950,870 985,850 1010,830 1040,775", "1062,690 1085,690", "1105,645 1160,608 1210,632 1250,625", "1105,645 1135,675", "1182,742 1200,780 1290,800",
      "770,868 800,862 830,880 845,915 838,980 850,1015 858,1060 848,1080", "845,915 880,890 915,870 945,890 985,880 980,895 945,900 945,930 930,980 890,1010 850,1015", "665,880 668,845 685,800 640,780", "655,785 690,850 670,830", "588,892 625,885 670,880 685,940 690,965 735,1030", "640,885 640,930 615,945 650,985 710,1045", "655,1208 700,1200 750,1180 788,1165 785,1125", "750,1180 760,1215",
      "350,700 375,695 390,710 380,740 420,790", "370,710 400,760", "1140,1040 1190,1015 1215,1040 1200,1080 1180,1140",
      "207,905 207,970 165,1000 130,1020 130,1055 98,1060 98,1075 75,1138 48,1138", "130,1050 260,1175 335,1108 320,1080 320,990 300,960 302,890", "152,1085 162,1230 98,1232 65,1212 48,1220", "325,980 330,930", "260,1175 262,1228 220,1242 190,1255 165,1300 132,1308 90,1275 55,1245", "335,1108 378,1118 462,1165 472,1130 472,980", "472,1130 595,1130", "462,1165 462,1230 442,1262 410,1310 380,1332 358,1290 358,1262 368,1220 372,1118", "255,1298 262,1262 358,1262", "362,1290 340,1350 318,1355 305,1380", "225,1375 225,1298 245,1295 218,1242", "190,1380 188,1298 225,1298", "165,1300 165,1380", "90,1330 110,1315 130,1345 115,1365", "50,1272 95,1275",
      "442,1262 450,1310 492,1312 530,1320 555,1278 560,1310 548,1350 575,1392 635,1402 672,1385 715,1340 690,1335 655,1300", "600,1160 590,1245 650,1265 655,1290", "590,1245 570,1290 555,1310", "635,1402 635,1470", "312,1418 362,1420 375,1380 430,1385 490,1382 535,1400 552,1400 540,1430 522,1470 518,1568", "362,1420 372,1455 345,1475 345,1500", "450,1310 500,1395", "380,1332 378,1382", "345,1530 385,1540 395,1568",
    ],
  },
  {
    m: SOUTH_W,
    land: [
      "1104,-10 1103,45 1115,90 1125,140 1133,205 1165,260 1168,330 1162,430 1158,520 1150,620 1148,700 1140,790 1138,850 1145,940 1160,985 1178,1022 1194,1000 1182,985 1172,960 1165,915 1180,880 1190,825 1180,795 1192,760 1200,690 1196,650 1210,635 1230,632 1242,590 1236,555 1255,558 1262,520 1275,480 1288,430 1290,390 1315,345 1332,330 1342,230 1345,190 1362,130 1366,70 1350,40 1310,15 1285,-10",
      "258,-15 275,-8 283,12 293,0 315,15 333,40 345,62 348,85 358,105 370,145 350,130 338,105 322,125 305,110 300,100 308,75 295,48 283,35 270,15",
      "158,350 165,322 200,290 210,250 220,225 235,200 248,213 258,168 272,170 290,175 284,205 300,235 312,258 318,210 323,150 330,185 340,215 348,285 362,320 372,370 385,400 387,440 383,495 370,560 365,610 345,615 338,632 318,622 308,595 302,562 298,520 295,555 285,545 275,505 258,495 240,505 228,530 215,542 195,542 180,562 168,545 170,480 160,400",
      "335,675 355,682 352,715 345,735 338,705",
      "498,550 512,590 516,615 530,612 520,650 512,690 510,660 503,650 510,630 505,590", "497,672 508,690 495,740 485,765 480,790 470,798 462,785 468,760 490,710",
      "112,75 140,92 150,100 165,105 162,115 130,105 115,92",
      "1175,1425 1180,1390 1195,1360 1205,1320 1225,1270 1248,1250 1235,1275 1232,1300 1218,1330 1208,1365 1200,1380 1192,1440 1200,1480 1210,1500 1212,1540 1180,1540 1188,1480 1185,1440",
      "1155,1472 1165,1485 1170,1540 1150,1540", "1133,1515 1140,1520 1138,1540 1133,1540", "280,-30 284,-20 280,-10",
    ],
    thin: ["448,303 462,335", "195,140 212,115", "195,122 225,128", "210,145 228,112", "360,70 378,65 382,45", "165,112 195,118", "1350,978 1360,1000", "1220,920 1235,922", "332,640 350,660", "200,0 205,60", "196,10 210,30"],
    dotted: ["395,60 410,90 430,135 438,150", "525,268 528,250 538,235", "465,205 472,270", "478,230 478,290", "580,190 586,205", "1205,1240 1235,1215", "1250,1185 1252,1195", "1170,930 1185,1000", "230,30 275,25 270,60", "712,250 712,265", "558,730 560,745", "435,1370 450,1415", "1145,690 1150,900", "85,1340 98,1350"],
    borders: [
      "1168,0 1148,60 1145,100 1165,130 1170,155 1185,130", "1170,155 1168,260 1182,340 1172,420 1168,520 1160,600 1158,700 1155,760 1150,850 1148,900 1170,930", "1182,340 1208,330 1210,290 1235,285 1235,245 1225,235 1222,205", "1235,285 1240,330 1255,365 1260,400 1250,428 1232,418 1235,390 1210,340 1210,290", "1258,410 1238,470 1234,550", "1238,470 1260,515", "314,15 314,125", "1145,0 1135,20 1115,50",
    ],
  },
  {
    m: SOUTH_E,
    land: [
      "68,-20 78,10 88,50 92,90 97,150 85,250 92,300 103,420 118,490 122,540 130,556 140,545 165,540 185,490 200,430 202,388 215,370 212,300 242,245 243,200 240,150 235,102 240,50 255,-20",
      "293,170 298,215 290,290 280,370 268,390 260,365 263,320 263,240 282,215",
      "418,1540 438,1510 455,1440 490,1395 500,1385 545,1380 573,1378 580,1355 600,1362 620,1380 632,1390 640,1350 656,1388 650,1408 690,1400 715,1375 730,1402 740,1370 765,1362 790,1370 815,1395 817,1420 830,1440 830,1455 870,1462 885,1490 905,1535",
      "188,1540 200,1520 205,1465 215,1500 235,1540 240,1470 258,1435 278,1405 290,1430 302,1360 315,1350 330,1365 335,1405 370,1420 400,1430 406,1450 402,1540",
    ],
    thin: ["325,318 338,295", "400,850 406,870"],
    dotted: ["575,1340 588,1330", "265,165 270,180", "530,1350 560,1358", "425,948 426,960"],
    borders: [
      "88,70 115,75 118,105 135,85 142,120 142,152 165,165 182,185 180,120 190,108 205,130 212,200 192,205 165,262 88,250", "142,152 142,220 150,258", "160,265 180,325 198,325 203,290 198,240 188,232", "135,265 133,320 130,330 130,440 112,445", "133,410 148,390 165,380 185,330", "212,160 240,152", "212,200 215,245", "172,455 182,460 178,478 170,468 172,455", "185,-10 182,60 190,108", "85,10 100,60", "195,380 198,405",
    ],
  },
];

type Tone = "g" | "o" | "r";
const toneColors: Record<Tone, string> = { g: "#6dc264", o: "#f0bf70", r: "#ec7370" };
type Origin = [number, number, number, number];
const oAmerica: Origin = [950, 365, 0.20727, 0.15944];
const oEurasia: Origin = [1210, 365, 0.22321, 0.15944];
const oFarEast: Origin = [1550, 365, 0.22226, 0.15944];
const oSouthW: Origin = [635, 600, 0.3986, 0.14668];
const oSouthE: Origin = [1250, 600, 0.41358, 0.14668];

const markers: [Origin, Tone, string][] = [
  [oAmerica, "g", "147,655 202,675 155,762 213,760 155,850 150,868 220,935 262,948 325,905 338,835 320,975 290,935 283,930 363,1112 385,1145 357,1152 403,1173 468,695 440,698 468,728 520,755 545,775 560,775 575,790 435,805 530,790 545,830 575,850 515,820 480,900 460,800 460,750 420,870 450,890 450,845 495,855 560,930 520,970 410,960 405,1005 425,1020 490,970 525,995 600,940 615,955 655,725 685,705 682,718 725,745 793,740 600,1015 600,1025 610,1045 590,1030 815,1300"],
  [oAmerica, "o", "148,675 142,718 262,817 160,870 165,880 160,868 430,950 537,945 503,915 568,835 693,750 705,795 712,800 708,770 655,890 610,1067"],
  [oAmerica, "r", "205,960 202,948 445,1005 552,895 618,760 660,830 645,848 677,815 618,900 610,1070"],
  [oEurasia, "g", "190,535 208,545 155,550 220,595 245,652 270,570 343,548 348,488 403,393 305,685 340,665 413,668 460,782 162,778 190,885 183,820 240,798 575,968 695,1088 708,1010 785,1075 790,1080 745,1080 975,940 982,935 925,1105 930,1120 1178,1085 1155,1078 255,1357 625,1515 597,1470 1407,830 1513,875 1460,980 1385,1127 1453,1240 1223,1337 1273,1387 1285,1432 1278,1440 1310,1540 1110,1170 1085,1200 985,1250 1000,1300 1015,1325"],
  [oEurasia, "o", "205,570 310,622 367,623 428,735 585,970 708,1015 775,1092 1255,1407 975,1000 965,1020 1020,1050 1035,1060 1080,1060 1010,1080 960,1080 960,1155 958,1175 975,1190 1118,1110 1110,1130 1095,1180 1085,1195 975,1260 1030,1160 1040,1210 1000,1310 1025,1300"],
  [oEurasia, "g", "1050,1125 1042,1120"],
  [oEurasia, "o", "1030,1170 990,1120 1068,1190"],
  [oEurasia, "r", "127,550 320,668 252,830 737,1067 1012,965 1010,975 980,1040 1010,1025 1115,1070 995,1165 1020,1200 988,1195 1030,1225 1020,1240 1075,1170 972,1225 1042,1270 985,1312 1008,1338 1018,1320 1030,1287"],
  [oFarEast, "g", "78,925"],
  [oFarEast, "r", "123,905"],
  [oSouthW, "g", "1297,342"],
  [oSouthE, "g", "177,395 610,75 844,510 854,535 819,608 984,592"],
];

const WORLD = 819.2;
const labels: ["continent" | "ocean", number, number, string][] = [
  ["continent", 1464, 480.9, "Asia"], ["continent", 644.8, 480.9, "Asia"],
  ["continent", 1034, 487.8, "North"], ["continent", 1034, 503.2, "America"],
  ["continent", 1853.2, 487.8, "North"], ["continent", 1853.2, 503.2, "America"],
  ["continent", 1292.8, 558.4, "Africa"], ["continent", 1297.3, 471.5, "Europe"],
  ["continent", 1128, 612.7, "South"], ["continent", 1128, 627.7, "America"],
  ["continent", 745, 660.1, "Australia"], ["continent", 1564.2, 660.1, "Australia"],
  ["ocean", 1754, 528.3, "NORTH PACIFIC"], ["ocean", 1754, 543.7, "OCEAN"],
  ["ocean", 934.8, 528.3, "NORTH PACIFIC"], ["ocean", 934.8, 543.7, "OCEAN"],
  ["ocean", 1176.6, 500.8, "NORTH ATLANTIC"], ["ocean", 1176.6, 516, "OCEAN"],
  ["ocean", 971.2, 681.7, "SOUTH PACIFIC"], ["ocean", 971.2, 696.8, "OCEAN"],
  ["ocean", 1790.4, 681.7, "SOUTH PACIFIC"], ["ocean", 1790.4, 696.8, "OCEAN"],
  ["ocean", 1213.6, 691.2, "SOUTH ATLANTIC"], ["ocean", 1213.6, 706.3, "OCEAN"],
  ["ocean", 1449.6, 700, "INDIAN OCEAN"], ["ocean", 650.4, 700, "OCEAN"],
  ["ocean", 1210.6, 803.2, "SOUTHERN OCEAN"],
];

const WorldMap = () => (
  <MapCanvas viewBox="636.3 369 1245.3 456" preserveAspectRatio="none">
    <defs>
      <filter id="coast" filterUnits="userSpaceOnUse" x="636" y="369" width="1246" height="456" colorInterpolationFilters="sRGB">
        <feTurbulence type="fractalNoise" baseFrequency="0.28" numOctaves="2" seed="4" />
        <feDisplacementMap in="SourceGraphic" scale="4" xChannelSelector="R" yChannelSelector="G" />
      </filter>
      <g id="coasts">
        <g className="land">
          {sheets.map((s, i) => (
            <g key={i} transform={s.m}>
              {s.land?.map((p, k) => <polygon key={k} points={p} />)}
              {s.thin?.map((p, k) => <polyline key={k} points={p} strokeWidth="3.2" />)}
              {s.dotted?.map((p, k) => <polyline key={k} points={p} strokeWidth="2" strokeDasharray="4 7" opacity=".7" />)}
            </g>
          ))}
        </g>
        <g className="water">
          {sheets.map((s, i) => (
            <g key={i} transform={s.m}>
              {s.water?.map((p, k) => <polygon key={k} points={p} />)}
              {s.inlet?.map((p, k) => <polyline key={k} points={p} strokeWidth="3.4" />)}
            </g>
          ))}
        </g>
      </g>
      <g id="borders" className="border">
        {sheets.map((s, i) => (
          <g key={i} transform={s.m}>
            {s.borders?.map((p, k) => <polyline key={k} points={p} />)}
          </g>
        ))}
      </g>
    </defs>
    <g filter="url(#coast)">
      {[0, -WORLD, WORLD].map((dx) => <use key={dx} href="#coasts" x={dx} />)}
      {[0, -WORLD, WORLD].map((dx) => <use key={dx} href="#borders" x={dx} />)}
    </g>
    {labels.map(([kind, x, y, text], i) => (
      <text key={i} className={kind} x={x} y={y}>{text}</text>
    ))}
    {markers.map(([[ox, oy, sx, sy], tone, list], i) => (
      <g key={i} fill={toneColors[tone]}>
        {list.split(" ").map((pair, k) => {
          const [px, py] = pair.split(",").map(Number);
          const cx = ox + px * sx;
          const cy = oy + py * sy;
          return (
            <g key={k}>
              <circle cx={cx} cy={cy} r="7.5" opacity=".55" />
              <circle cx={cx} cy={cy} r="6.4" stroke="#fff" strokeOpacity=".66" strokeWidth=".9" />
            </g>
          );
        })}
      </g>
    ))}
  </MapCanvas>
);

/* ---------- data ---------- */
const rows: [string, string, string][] = [
  ["Singānallūr, IN", "95.91", "517"],
  ["Visakhapatnam, IN", "95.23", "479"],
  ["Jalandhar, IN", "95.04", "265"],
  ["New Delhi (Block F), IN", "94.88", "501"],
  ["Jackson Township, US", "94.2", "244"],
  ["London, GB", "93.73", "287"],
  ["Hyderabad (NBT Nagar), IN", "93.57", "1537"],
  ["Hyderabad (Moosarambagh), IN", "93.24", "296"],
  ["Hyderabad (Esamiya Bazaar), IN", "93.17", "488"],
  ["Kolkata (Nator Park), IN", "93.17", "244"],
];
const navItems: [string, boolean][] = [
  ["SUMMARY", false], ["USERS", false], ["CALL DETAILS", true], ["PLATFORM", true], ["EVENTS", false], ["REPORTS", false], ["ADMIN", false],
];

export default function App() {
  return (
    <Page>
      <GlobalStyle />
      <TopStrip />
      <Header>
        <HeaderLeft>
          <Powered>Powered by Nectar</Powered>
          <BrandRow>
            <Brand>
              <Globe />
              <BrandBold>AT&amp;T</BrandBold>
              <BrandLight>Business</BrandLight>
            </Brand>
            <ScopeSelect>Users<Caret /></ScopeSelect>
            <SearchBox>
              <SearchIcon />
              <SearchText>Search users</SearchText>
              <ClearIcon />
            </SearchBox>
          </BrandRow>
          <Nav>
            {navItems.map(([name, menu], i) => (
              <NavItem key={name} $active={i === 0}>{name}{menu && <ChevronIcon />}</NavItem>
            ))}
          </Nav>
        </HeaderLeft>
        <HeaderRight>
          <UserMenu><UserIcon />robert.sese@connxai.com<Caret /></UserMenu>
          <ShareLink><LinkIcon />Share a link</ShareLink>
        </HeaderRight>
      </Header>
      <Main>
        <FilterPanel>
          <FilterHead>
            <FilterTitle>
              <Heading>FILTERS</Heading>
              <CheckBox />
              <CheckLabel>Auto update</CheckLabel>
            </FilterTitle>
            <Group>
              <Button $w={104.1} $flat>RESET FILTER<ResetIcon /></Button>
              <Button $w={103}>Show/Hide Filters<Caret /></Button>
            </Group>
          </FilterHead>
          <SelectRow>
            <Select $w={143} $gap={8.6}>TIME PERIOD:<b>30 Days</b><Caret /></Select>
            <Select $w={213.8} $gap={5.6}>CORPORATE LOCATION:<b>All Locations</b><Caret /></Select>
            <Select $w={159.8} $gap={2.8}>PLATFORM:<b>All</b><Caret /></Select>
          </SelectRow>
        </FilterPanel>

        <AlertPanel>
          <AlertTitle>ALERTS SUMMARY</AlertTitle>
          <AlertCard>CISCO<AlertValue>N/A</AlertValue></AlertCard>
        </AlertPanel>

        <Overview>
          <TablePanel>
            <Tabs>
              <Tab>CORPORATE</Tab>
              <Tab $active>EXTERNAL</Tab>
            </Tabs>
            <TableHead>
              <HeadName>Location</HeadName>
              <HeadNumber>Avg NectarScore</HeadNumber>
              <SortIcon />
              <HeadNumber>Sessions</HeadNumber>
            </TableHead>
            <TableBody>
              <Rows>
                {rows.map(([place, score, count]) => (
                  <Row key={place}>
                    <Place>{place}</Place>
                    <Score>{score}</Score>
                    <Count>{count}</Count>
                  </Row>
                ))}
              </Rows>
              <Track><Thumb /></Track>
            </TableBody>
            <TotalRow>
              <Place>All</Place>
              <Score>89.62</Score>
              <Count>90648</Count>
            </TotalRow>
          </TablePanel>
          <MapPanel>
            <WorldMap />
            <ZoomControl>
              <ZoomButton>
                <svg viewBox="0 0 11 11" stroke="currentColor" strokeWidth="1.9"><path d="M0 5.5h11M5.5 0v11" /></svg>
              </ZoomButton>
              <ZoomButton $off>
                <svg viewBox="0 0 11 11" stroke="currentColor" strokeWidth="1.9"><path d="M0 5.5h11" /></svg>
              </ZoomButton>
            </ZoomControl>
            <Attribution>
              <a>Leaflet</a> | Map tiles by <a>Stamen Design</a>, under <a>CC BY 3.0</a>. Data by <a>OpenStreetMap</a>, under <a>ODbL</a>.
            </Attribution>
          </MapPanel>
        </Overview>

        <SessionPanel>
          <SessionHead>
            <Heading>SESSIONS</Heading>
            <Button $w={60}>Graphs<Caret /></Button>
          </SessionHead>
          <Chart>
            <GridLine><span>8k</span></GridLine>
            <GridLine><span>6k</span><span>6k</span></GridLine>
            <GridLine><span>4k</span><span>4k</span></GridLine>
            <Spikes viewBox="36.6 873.4 1821.8 96" preserveAspectRatio="none">
              <polyline points="92.6,974 97.3,957.5 102,974" />
              <polyline points="1349.8,974 1357.3,926.5 1366.3,974" />
            </Spikes>
          </Chart>
        </SessionPanel>
      </Main>
    </Page>
  );
}
